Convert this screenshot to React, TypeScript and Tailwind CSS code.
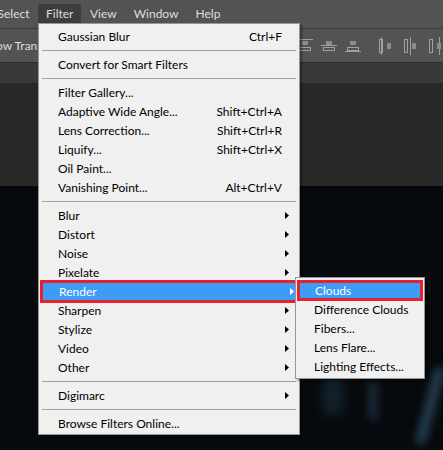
import React from "react";

type Item =
  | { kind: "sep" }
  | { kind: "item"; label: string; shortcut?: string; sub?: boolean; active?: boolean };

const filterItems: Item[] = [
  { kind: "item", label: "Gaussian Blur", shortcut: "Ctrl+F" },
  { kind: "sep" },
  { kind: "item", label: "Convert for Smart Filters" },
  { kind: "sep" },
  { kind: "item", label: "Filter Gallery..." },
  { kind: "item", label: "Adaptive Wide Angle...", shortcut: "Shift+Ctrl+A" },
  { kind: "item", label: "Lens Correction...", shortcut: "Shift+Ctrl+R" },
  { kind: "item", label: "Liquify...", shortcut: "Shift+Ctrl+X" },
  { kind: "item", label: "Oil Paint..." },
  { kind: "item", label: "Vanishing Point...", shortcut: "Alt+Ctrl+V" },
  { kind: "sep" },
  { kind: "item", label: "Blur", sub: true },
  { kind: "item", label: "Distort", sub: true },
  { kind: "item", label: "Noise", sub: true },
  { kind: "item", label: "Pixelate", sub: true },
  { kind: "item", label: "Render", sub: true, active: true },
  { kind: "item", label: "Sharpen", sub: true },
  { kind: "item", label: "Stylize", sub: true },
  { kind: "item", label: "Video", sub: true },
  { kind: "item", label: "Other", sub: true },
  { kind: "sep" },
  { kind: "item", label: "Digimarc", sub: true },
  { kind: "sep" },
  { kind: "item", label: "Browse Filters Online..." },
];

const renderItems = ["Clouds", "Difference Clouds", "Fibers...", "Lens Flare...", "Lighting Effects..."];

const menuBar = ["Select", "Filter", "View", "Window", "Help"];

function Arrow({ white }: { white?: boolean }) {
  return (
    <svg width="4" height="7" viewBox="0 0 4 7" className="shrink-0">
      <path d="M0 0 L4 3.5 L0 7 Z" fill={white ? "#ffffff" : "#000000"} />
    </svg>
  );
}

// align top / center / bottom edges
function AlignH({ pos }: { pos: number }) {
  const y = [2.5, 8.5, 14.5][pos];
  return (
    <svg width="16" height="18" viewBox="0 0 16 18" className="shrink-0">
      <line x1="0" y1={y} x2="16" y2={y} stroke="#a0a0a0" />
      <rect x="5" y="4" width="6" height="4" fill="#8c8c8c" />
      <rect x="2.5" y="10.5" width="11" height="3" fill="none" stroke="#a0a0a0" />
    </svg>
  );
}

// align left / center / right edges
function AlignV({ pos }: { pos: number }) {
  const x = [2.5, 6.5, 10.5][pos];
  return (
    <svg width="14" height="18" viewBox="0 0 14 18" className="shrink-0">
      <line x1={x} y1="0" x2={x} y2="18" stroke="#a0a0a0" />
      <rect x="0.5" y="2.5" width="3" height="13" fill="none" stroke="#a0a0a0" />
      <rect x="8" y="6" width="4" height="6" fill="#8c8c8c" />
    </svg>
  );
}

export default function App() {
  return (
    <div className="relative w-[443px] h-[450px] overflow-hidden bg-[#06090d] font-['Lato','Noto_Sans',sans-serif] text-[12px] flex flex-col">
      {/* menu bar */}
      <div className="h-[29px] shrink-0 bg-[#535353] border-b border-[#393939] flex items-start text-[#dedede] text-[12px] ml-[-11px]">
        {menuBar.map((m) => (
          <span
            key={m}
            className={
              m === "Filter"
                ? "mt-[4px] h-[20px] px-[8px] rounded-t-[3px] bg-[#3d3d3d] flex items-center"
                : "mt-[4px] h-[20px] px-[8.5px] flex items-center"
            }
          >
            {m}
          </span>
        ))}
      </div>
      {/* options bar */}
      <div className="h-[34px] shrink-0 bg-[#535353] border-b border-[#2c2c2c] flex items-center">
        <span className="text-[#dedede] ml-[-4px]">ow Transform</span>
        <div className="ml-auto flex items-center">
          <AlignH pos={0} />
          <span className="w-[8px]" />
          <AlignH pos={1} />
          <span className="w-[8px]" />
          <AlignH pos={2} />
          <span className="w-[18px]" />
          <AlignV pos={0} />
          <span className="w-[11px]" />
          <AlignV pos={1} />
          <span className="w-[11px]" />
          <AlignV pos={2} />
        </div>
      </div>
      {/* tab strip */}
      <div className="h-[20px] shrink-0 bg-[#393939]" />
      {/* panel area */}
      <div className="h-[103px] shrink-0 bg-[#282828]" />
      {/* canvas */}
      <div className="relative flex-1 bg-[#06090d] overflow-hidden">
        <div className="absolute left-[322px] top-[190px] w-[22px] h-[40px] rounded-full bg-[#2a4558] opacity-40 blur-[6px]" />
        <div className="absolute left-[425px] top-[180px] w-[10px] h-[80px] rotate-[15deg] rounded-full bg-[#3b6580] opacity-60 blur-[4px]" />
        <div className="absolute left-[368px] top-[195px] w-[10px] h-[40px] rounded-full bg-[#2c4a60] opacity-50 blur-[4px]" />
      </div>

      {/* Filter menu */}
      <div className="absolute left-[38px] top-[23px] w-[262px] h-[412px] bg-[#f0f0f0] border border-[#979797] shadow-[2px_2px_2px_rgba(0,0,0,0.35)] pt-[3px] text-black">
        {filterItems.map((it, i) =>
          it.kind === "sep" ? (
            <div key={i} className="h-[9px] flex items-center px-[3px]">
              <div className="w-full h-px bg-[#a0a0a0]" />
            </div>
          ) : it.active ? (
            <div key={i} className="h-[19px] flex items-center mx-[1px] mr-[-2px]">
              <div className="w-full h-[23px] border-[3px] border-[#e8202a] bg-[#3d9cf5] text-white flex items-center pl-[16px] pr-[4px]">
                <span className="flex-1">{it.label}</span>
                <Arrow white />
              </div>
            </div>
          ) : (
            <div key={i} className="h-[19px] flex items-center pl-[19px] pr-[10px]">
              <span className="flex-1">{it.label}</span>
              {it.shortcut && <span className="mr-[7px]">{it.shortcut}</span>}
              {it.sub && <Arrow />}
            </div>
          )
        )}
      </div>

      {/* Render submenu */}
      <div className="absolute left-[295px] top-[277px] w-[130px] h-[102px] bg-[#f0f0f0] border border-[#979797] shadow-[2px_2px_2px_rgba(0,0,0,0.35)] pt-[3px] text-black">
        {renderItems.map((label, i) =>
          i === 0 ? (
            <div key={label} className="h-[19px] flex items-center mx-[1px]">
              <div className="w-full h-[21px] border-[3px] border-[#e8202a] bg-[#3d9cf5] text-white flex items-center pl-[15px]">
                {label}
              </div>
            </div>
          ) : (
            <div key={label} className="h-[19px] flex items-center pl-[18px]">
              {label}
            </div>
          )
        )}
      </div>
    </div>
  );
}
